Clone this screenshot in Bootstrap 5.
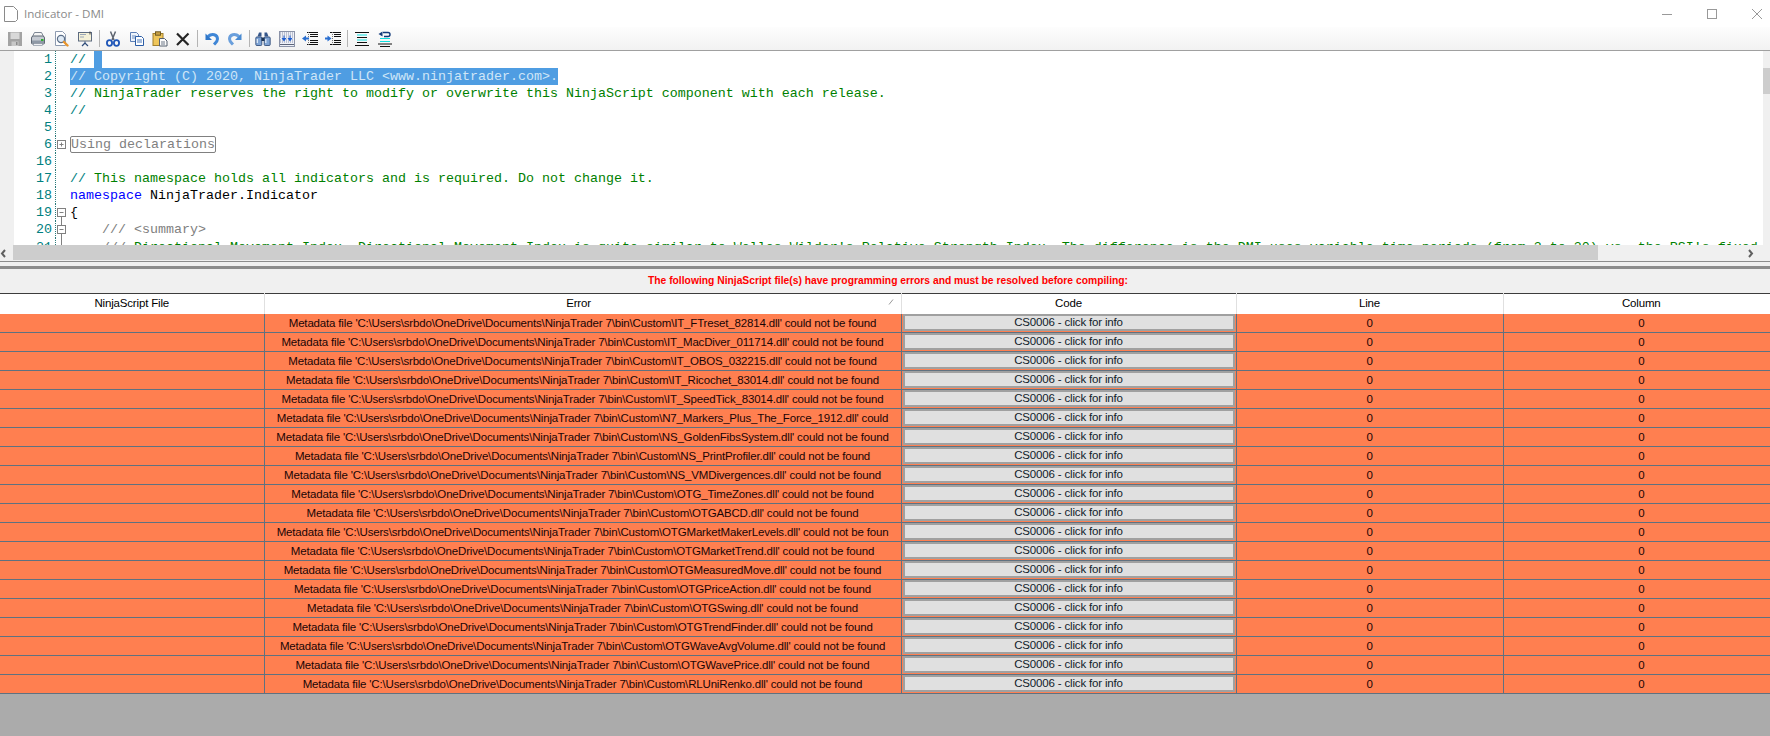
<!DOCTYPE html>
<html lang="en">
<head>
<meta charset="utf-8">
<title>Indicator - DMI</title>
<link href="https://cdn.jsdelivr.net/npm/bootstrap@5.3.0/dist/css/bootstrap.min.css" rel="stylesheet">
<style>
html,body{height:100%;overflow:hidden;background:#fff}
body{font-family:"Liberation Sans",Arial,sans-serif;font-size:12px;color:#000}
.win{height:736px}
.titlebar{height:27px;padding-left:4px}
.titletext{font-family:"Open Sans","Noto Sans",sans-serif;font-size:11.6px;color:#8a8a8a;margin-left:6px}
.winbtns{gap:35px;padding-right:8px}
.toolbar{height:24px;background:linear-gradient(#fdfdfd,#f2f2f2);border-bottom:1px solid #a0a0a0;padding-left:7px;gap:7.35px}
.toolbar svg{width:16px;height:16px;display:block;flex:none}
.tbsep{width:1px;height:17px;background:#b4b4b4;margin:0 -1.7px}
.editor{height:194px}
.codepane{min-width:0}
.gutterbg{width:14px;background:#f0f0f0;flex:none}
.cl{height:17px;line-height:17px;font-family:"Liberation Mono","Courier New",monospace;font-size:13.33px;white-space:pre}
.cl.lastcl{line-height:19px}
.ln{width:42px;flex:none;text-align:right;padding-right:3px;color:#008080;border-right:1px dotted #2a7a7a}
.fd{width:14px;flex:none}
.fd svg{display:block;width:14px;height:17px}
.cm{color:#008000}
.sl{color:#008080}
.kw{color:#0000ff}
.gr{color:#808080}
.sel{background:#4f9de2;color:#cfe6f7}
.selblock{display:inline-block;width:8px;height:17px;background:#4f9de2;margin-left:8px;vertical-align:top}
.foldbox{display:inline-block;height:17px;line-height:15px;border:1px solid #808080;border-radius:2px;color:#808080;vertical-align:top}
.vscroll{width:7px;flex:none;background:#f0f0f0}
.vthumb{height:26px;background:#cdcdcd;margin-top:17px}
.hscroll{height:16px;background:#f0f0f0}
.harrow{width:13px;flex:none;color:#606060}
.harrow svg{width:7px;height:9px;display:block}
.hthumb{width:1585px;height:15px;background:#cdcdcd;flex:none}
.splitter{height:32px;background:#f0f0f0;border-top:1px solid #8c8c8c}
.splitgrip{height:3px;margin-top:4px;background:#8c8c8c}
.errmsg{height:24px;line-height:24px;text-align:center;color:#ff0000;font-weight:700;font-size:10.3px;padding-left:6px}
.errtable{table-layout:fixed;width:100%;border-collapse:collapse;border-top:1px solid #3c3c3c}
.errtable th{height:20px;font-weight:400;text-align:center;background:#fff;border-right:1px solid #e0e0e0;position:relative;font-size:11.5px;letter-spacing:-.17px;padding:0}
.errtable td{height:19px;background:#ff7f50;border-bottom:1px solid #5f7180;border-right:1px solid #5f7180;text-align:center;padding:0;white-space:nowrap;overflow:hidden;color:#1a0505;font-size:11.5px;letter-spacing:-.17px;line-height:18px}
.errtable th:last-child,.errtable td:last-child{border-right:0;padding-left:9px}
.errtable th.errhead{padding-right:8px}
.btncell{padding:0 1px 1px 1px!important}
.infobtn{background:#e0e0e0;border:2px solid #a0a0a0;border-radius:0;height:17px;line-height:13px;text-align:center;color:#10202a;padding:0}
.sortg{position:absolute;right:7px;top:5px;width:6px;height:6px}
.restarea{background:#ababab}
</style>
</head>
<body>
<svg width="0" height="0" class="d-block" style="position:absolute">
<defs>
<symbol id="i-save" viewBox="0 0 16 16"><rect x="1" y="1" width="14" height="14" fill="#a3a3a3"/><rect x="3.5" y="1.5" width="9" height="6.5" fill="#d8d8d8"/><rect x="4.5" y="10.5" width="7" height="4.5" fill="#c8c8c8"/><rect x="9" y="11" width="1.5" height="3" fill="#8a8a8a"/></symbol>
<symbol id="i-print" viewBox="0 0 16 16"><path d="M4.5 1.5h7l2 4h-11z" fill="#f4f4f4" stroke="#7d8794"/><path d="M1.5 7q0-2 2-2h9q2 0 2 2v5q0 1-1 1h-11q-1 0-1-1z" fill="#c5cad2" stroke="#5f6874"/><rect x="2" y="9.5" width="12" height="2.5" fill="#8f99a6"/><rect x="11" y="8" width="2.5" height="2" fill="#2fae2f"/><rect x="3.5" y="12.5" width="9" height="2" fill="#eef0f3" stroke="#7d8794" stroke-width=".6"/></symbol>
<symbol id="i-prev" viewBox="0 0 16 16"><path d="M1.500 .5h7l3 3v11h-10z" fill="#fff" stroke="#8e9bb0"/><circle cx="7" cy="8" r="3.600" fill="#dfeaf5" stroke="#5c6f88" stroke-width="1.200"/><path d="M10 11l3.500 3.500" stroke="#e8952c" stroke-width="2.400" stroke-linecap="round"/></symbol>
<symbol id="i-pres" viewBox="0 0 16 16"><rect x="1.500" y="1.500" width="13" height="8.500" fill="#f5f1d8" stroke="#5d6b80"/><path d="M3 3.500h6M3 6h4" stroke="#9aa7b8"/><path d="M8 10.500v2M5 15l3-3 3 3M7 13l-2 2" stroke="#2d4a78" stroke-width="1.200" fill="none"/><path d="M13 .5v3" stroke="#3c3c3c"/></symbol>
<symbol id="i-cut" viewBox="0 0 16 16"><path d="M5.500 .5L9 9M10.500 .5L7 9" stroke="#5e6470" stroke-width="1.500" fill="none"/><ellipse cx="4.500" cy="12" rx="2.600" ry="2.800" fill="none" stroke="#1f56b8" stroke-width="1.800"/><ellipse cx="11.500" cy="12" rx="2.600" ry="2.800" fill="none" stroke="#1f56b8" stroke-width="1.800"/></symbol>
<symbol id="i-copy" viewBox="0 0 16 16"><path d="M1.500 1.500h6l2 2v7h-8z" fill="#eef4fb" stroke="#5d7fb5"/><path d="M3 5h4M3 7h4" stroke="#6e8fc0"/><path d="M6.500 5.500h6l2 2v7h-8z" fill="#fff" stroke="#2b5da6"/><path d="M8 9h5M8 11h5" stroke="#4b78ba"/></symbol>
<symbol id="i-paste" viewBox="0 0 16 16"><rect x="1" y="2.500" width="10" height="12" fill="#eec55a" stroke="#a07f2c"/><rect x="3.500" y=".8" width="5" height="3.400" fill="#c9a043" stroke="#6e5a24"/><path d="M7.500 7.500h5l2.500 2.500v5h-7.500z" fill="#fbfbfb" stroke="#55606f"/><path d="M9 11h4M9 13h4" stroke="#6c7888"/></symbol>
<symbol id="i-del" viewBox="0 0 16 16"><path d="M2 2.500l11.500 11.500M13.500 2.500L2 14" stroke="#252525" stroke-width="2.200" fill="none"/></symbol>
<symbol id="i-undo" viewBox="0 0 16 16"><path d="M4 5.500C8 2 13.500 3.500 13.500 8c0 2.500-2 4-3.500 5.500" stroke="#3f86d6" stroke-width="3" fill="none"/><path d="M1.500 2.500v6.500h6.500z" fill="#2f77c9"/></symbol>
<symbol id="i-redo" viewBox="0 0 16 16"><path d="M12 5.500C8 2 2.500 3.500 2.500 8c0 2.500 2 4 3.500 5.500" stroke="#6a9fdc" stroke-width="3" fill="none"/><path d="M14.500 2.500v6.500h-6.500z" fill="#4a8bd2"/></symbol>
<symbol id="i-find" viewBox="0 0 16 16"><path d="M2.500 5.500L4 1.500h2.500v4zM9.500 5.500v-4H12l1.500 4z" fill="#35568a"/><rect x=".8" y="6" width="6" height="8.500" rx="1" fill="#7ea3d4" stroke="#23406f" stroke-width=".8"/><rect x="9.200" y="6" width="6" height="8.500" rx="1" fill="#7ea3d4" stroke="#23406f" stroke-width=".8"/><rect x="6.500" y="6.500" width="3" height="3.500" fill="#1d3557"/><path d="M2.300 8v4M10.800 8v4" stroke="#e6eff9" stroke-width="1.200"/></symbol>
<symbol id="i-grid" viewBox="0 0 16 16"><rect x=".5" y=".5" width="15" height="15" fill="#eef0f8" stroke="#8b93a8"/><path d="M1 2h14M1 4h14M1 6h14M1 9h14M1 11h14" stroke="#8b93a8" stroke-dasharray="1 1"/><path d="M1 13.500h14" stroke="#5c6478"/><path d="M2.500 7h5l-2.500 3.500zM8.500 7h5L11 10.500z" fill="#1f5fd0"/><path d="M5 4.500v3M11 4.500v3" stroke="#1f5fd0"/></symbol>
<symbol id="i-outl" viewBox="0 0 16 16"><path d="M5 1.500h11M8 3.500h8M8 5.500h8M8 9.500h8M8 11.500h8M5 13.500h11" stroke="#111"/><path d="M6.500 1v14" stroke="#777" stroke-dasharray="1 1"/><path d="M0 7.500l4-3v2h3v2H4v2z" fill="#2a6fd0"/></symbol>
<symbol id="i-inl" viewBox="0 0 16 16"><path d="M5 1.500h11M9 3.500h7M9 5.500h7M9 9.500h7M9 11.500h7M5 13.500h11" stroke="#111"/><path d="M7.500 1v14" stroke="#777" stroke-dasharray="1 1"/><path d="M6.500 7.500l-4-3v2H0v2h2.500v2z" fill="#2a6fd0"/></symbol>
<symbol id="i-com" viewBox="0 0 16 16"><path d="M1 1.500h14M3 6.500h10M3 11.500h10M1 14.500h14" stroke="#111"/><path d="M3 4h10M3 9h10" stroke="#10e0e0" stroke-width="1.200"/></symbol>
<symbol id="i-unc" viewBox="0 0 16 16"><path d="M1 13h14M3 15.500h10" stroke="#111"/><path d="M3 7.500h10M3 10.500h10" stroke="#10e0e0" stroke-width="1.200"/><path d="M6 1.500h5a2 2 0 0 1 0 4H7" stroke="#123a7a" stroke-width="1.400" fill="none"/><path d="M1.500 3l4-2.500v5z" fill="#123a7a"/></symbol>
</defs>
</svg>
<div class="win d-flex flex-column">
  <div class="titlebar d-flex align-items-center flex-none">
    <svg width="14" height="16" viewBox="0 0 14 16"><path d="M.5.500h9l4 4v9l-2 2h-11z" fill="#fff" stroke="#8a8a8a"/></svg>
    <span class="titletext">Indicator - DMI</span>
    <div class="ms-auto d-flex align-items-center winbtns">
      <svg width="10" height="10"><path d="M0 5.500h10" stroke="#999"/></svg>
      <svg width="10" height="10"><rect x=".5" y=".5" width="9" height="9" fill="none" stroke="#999"/></svg>
      <svg width="10" height="10"><path d="M0 0l10 10M10 0L0 10" stroke="#999"/></svg>
    </div>
  </div>
  <div class="toolbar d-flex align-items-center">
    <svg><use href="#i-save"/></svg><svg><use href="#i-print"/></svg><svg><use href="#i-prev"/></svg><svg><use href="#i-pres"/></svg>
    <div class="tbsep"></div>
    <svg><use href="#i-cut"/></svg><svg><use href="#i-copy"/></svg><svg><use href="#i-paste"/></svg><svg><use href="#i-del"/></svg>
    <div class="tbsep"></div>
    <svg><use href="#i-undo"/></svg><svg><use href="#i-redo"/></svg>
    <div class="tbsep"></div>
    <svg><use href="#i-find"/></svg><svg><use href="#i-grid"/></svg><svg><use href="#i-outl"/></svg><svg><use href="#i-inl"/></svg>
    <div class="tbsep"></div>
    <svg><use href="#i-com"/></svg><svg><use href="#i-unc"/></svg>
  </div>
  <div class="editor d-flex overflow-hidden">
    <div class="gutterbg"></div>
    <div class="codepane flex-grow-1 overflow-hidden">
      <div class="cl d-flex"><div class="ln">1</div><div class="fd"></div><div><span class="sl">//</span><span class="selblock"></span></div></div>
      <div class="cl d-flex"><div class="ln">2</div><div class="fd"></div><div class="sel">// Copyright (C) 2020, NinjaTrader LLC &lt;www.ninjatrader.com&gt;.</div></div>
      <div class="cl d-flex"><div class="ln">3</div><div class="fd"></div><div class="cm"><span class="sl">//</span> NinjaTrader reserves the right to modify or overwrite this NinjaScript component with each release.</div></div>
      <div class="cl d-flex"><div class="ln">4</div><div class="fd"></div><div class="sl">//</div></div>
      <div class="cl d-flex"><div class="ln">5</div><div class="fd"></div><div></div></div>
      <div class="cl d-flex"><div class="ln">6</div><div class="fd"><svg viewBox="0 0 14 17"><rect x="1.500" y="4.500" width="8" height="8" fill="#fff" stroke="#808080"/><path d="M3.500 8.500h4M5.500 6.500v4" stroke="#808080"/></svg></div><div><span class="foldbox">Using declarations</span></div></div>
      <div class="cl d-flex"><div class="ln">16</div><div class="fd"></div><div></div></div>
      <div class="cl d-flex"><div class="ln">17</div><div class="fd"></div><div class="cm"><span class="sl">//</span> This namespace holds all indicators and is required. Do not change it.</div></div>
      <div class="cl d-flex"><div class="ln">18</div><div class="fd"></div><div><span class="kw">namespace</span> NinjaTrader.Indicator</div></div>
      <div class="cl d-flex"><div class="ln">19</div><div class="fd"><svg viewBox="0 0 14 17"><rect x="1.500" y="4.500" width="8" height="8" fill="#fff" stroke="#808080"/><path d="M3.500 8.500h4" stroke="#808080"/><path d="M5.500 13v4" stroke="#808080"/></svg></div><div>{</div></div>
      <div class="cl d-flex"><div class="ln">20</div><div class="fd"><svg viewBox="0 0 14 17"><path d="M5.500 0v17" stroke="#808080"/><rect x="1.500" y="4.500" width="8" height="8" fill="#fff" stroke="#808080"/><path d="M3.500 8.500h4" stroke="#808080"/></svg></div><div>    <span class="gr">/// &lt;summary&gt;</span></div></div>
      <div class="cl lastcl d-flex"><div class="ln">21</div><div class="fd"><svg viewBox="0 0 14 17"><path d="M5.500 0v17" stroke="#808080"/></svg></div><div>    <span class="gr">///</span> <span class="cm">Directional Movement Index. Directional Movement Index is quite similar to Welles Wilder's Relative Strength Index. The difference is the DMI uses variable time periods (from 3 to 30) vs. the RSI's fixed periods.</span></div></div>
    </div>
    <div class="vscroll"><div class="vthumb"></div></div>
  </div>
  <div class="hscroll d-flex">
    <div class="harrow d-flex align-items-center justify-content-start"><svg viewBox="0 0 7 9"><path d="M5 1L2 4.500 5 8" fill="none" stroke="currentColor" stroke-width="2"/></svg></div>
    <div class="hthumb"></div>
    <div class="flex-grow-1 d-flex align-items-center justify-content-end pe-3"><svg width="7" height="9" viewBox="0 0 7 9"><path d="M2 1l3 3.500L2 8" fill="none" stroke="#606060" stroke-width="2"/></svg></div>
  </div>
  <div class="splitter"><div class="splitgrip"></div><div class="errmsg">The following NinjaScript file(s) have programming errors and must be resolved before compiling:</div></div>
  <table class="errtable">
    <colgroup><col style="width:264px"><col style="width:637px"><col style="width:335px"><col style="width:267px"><col></colgroup>
    <thead><tr><th>NinjaScript File</th><th class="errhead">Error<svg class="sortg" viewBox="0 0 6 6"><path d="M1 5.500L5 .5" stroke="#999"/></svg></th><th>Code</th><th>Line</th><th>Column</th></tr></thead>
    <tbody id="rows"></tbody>
  </table>
  <div class="restarea flex-grow-1"></div>
</div>
<script>
const P="Metadata file 'C:\\Users\\srbdo\\OneDrive\\Documents\\NinjaTrader 7\\bin\\Custom\\";
const S=".dll' could not be found";
const r=[P+"IT_FTreset_82814"+S,P+"IT_MacDiver_011714"+S,P+"IT_OBOS_032215"+S,P+"IT_Ricochet_83014"+S,P+"IT_SpeedTick_83014"+S,P+"N7_Markers_Plus_The_Force_1912.dll' could",P+"NS_GoldenFibsSystem"+S,P+"NS_PrintProfiler"+S,P+"NS_VMDivergences"+S,P+"OTG_TimeZones"+S,P+"OTGABCD"+S,P+"OTGMarketMakerLevels.dll' could not be foun",P+"OTGMarketTrend"+S,P+"OTGMeasuredMove"+S,P+"OTGPriceAction"+S,P+"OTGSwing"+S,P+"OTGTrendFinder"+S,P+"OTGWaveAvgVolume"+S,P+"OTGWavePrice"+S,P+"RLUniRenko"+S];
const tb=document.getElementById('rows');
r.forEach(t=>{const tr=document.createElement('tr');
const cells=[['',0],[t,0],['',1],['0',0],['0',0]];
cells.forEach(([x,b])=>{const td=document.createElement('td');if(b){td.className='btncell';const d=document.createElement('div');d.className='infobtn';d.textContent='CS0006 - click for info';td.appendChild(d);}else td.textContent=x;tr.appendChild(td);});tb.appendChild(tr);});
</script>
<script src="https://cdn.jsdelivr.net/npm/bootstrap@5.3.0/dist/js/bootstrap.bundle.min.js"></script>
</body>
</html>
